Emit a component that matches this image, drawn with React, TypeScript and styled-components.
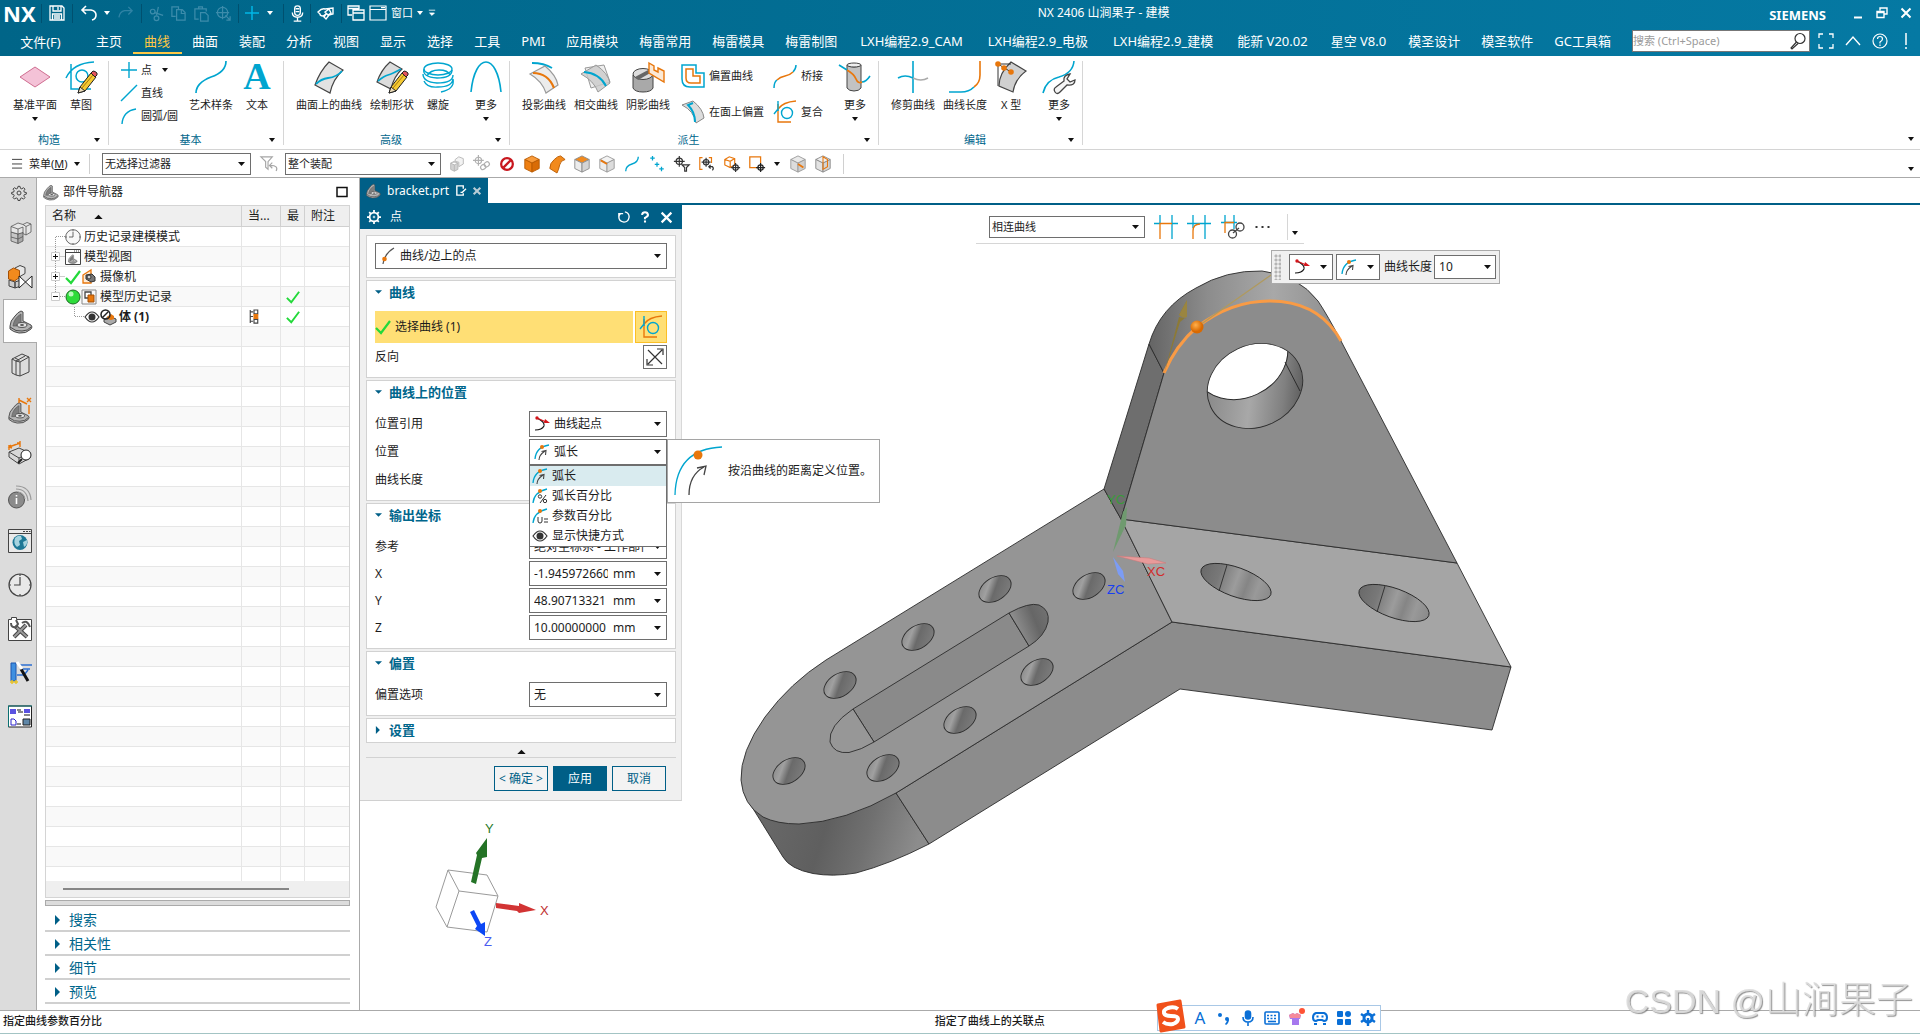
import React from "react";
import styled, { createGlobalStyle } from "styled-components";

const C = {
  cyan: "#00a5cf",
  orange: "#e8770c",
  ink: "#1c1c1c",
  line: "#4a4a4a",
  teal: "#005f87",
  frame: "#aaaaaa",
};

const Global = createGlobalStyle`
  *, *::before, *::after { box-sizing: border-box; }
  body { margin: 0; }
  body, button, input, select, table {
    font-family: "Noto Sans", "Noto Sans CJK SC", sans-serif;
    font-size: 12px;
    line-height: 16px;
    color: ${C.ink};
  }
  button { background: none; border: 0; padding: 0; cursor: default; white-space: nowrap; }
  svg { display: block; flex: none; }
`;

/* ------------------------------------------------------------------ icons */

const pencil = (
  <g>
    <path d="M13 32l2-6L26 12l5 4L20 30z" fill="#f5c931" stroke="#222" strokeWidth="1" />
    <path d="M13 32l2-6 5 4z" fill="#ecdcb8" stroke="#222" strokeWidth="1" />
    <path d="M17 27L28 14" stroke="#a77a10" />
    <path d="M26 12l2-2q2 0 4 2v2l-2 2z" fill="#e4545c" stroke="#222" strokeWidth="1" />
  </g>
);

const bracket = (
  <g strokeLinejoin="round">
    <path d="M1 17q0-5 5-10 3-4 6-5l2 1v9l8 4q2 2 0 4-5 5-12 4-6-1-9-4z" fill="#b4b4b4" stroke="#4c4c4c" />
    <path d="M4 17q1-8 8-12v9q-4 1-4 3z" fill="#7d7d7d" stroke="#5a5a5a" strokeWidth=".7" />
    <ellipse cx="13" cy="16" rx="5" ry="2.4" fill="#e4e4e4" stroke="#4c4c4c" />
    <ellipse cx="13" cy="16" rx="2" ry="1" fill="#555" />
    <path d="M1 18q6 5 12 4 6 0 9-4" fill="none" stroke="#4c4c4c" />
  </g>
);

const cube = (top: string, left: string, right: string, edge: string) => (
  <g stroke={edge} strokeLinejoin="round">
    <path d="M10 1l8 4-8 4-8-4z" fill={top} />
    <path d="M2 5l8 4v10l-8-4z" fill={left} />
    <path d="M18 5l-8 4v10l8-4z" fill={right} />
  </g>
);

const arcArrow = (
  <g fill="none">
    <path d="M1 15Q2 3 15 1" stroke={C.cyan} strokeWidth="1.3" />
    <path d="M5 16q0-5 6-9M7.500 7.500L12 6.500 11.500 11" stroke="#444" strokeWidth="1.100" />
    <circle cx="8" cy="3" r="2" fill={C.orange} />
  </g>
);

const sketchCurves = (a: string, b: string) => (
  <g fill="none" strokeWidth="1.4">
    <path d="M5 4v18h13" stroke={a} />
    <path d="M5 9Q10 2 23 1" stroke={a} />
    <path d="M5 1v10M1 14l4-5" stroke={b} />
    <circle cx="14" cy="13" r="5.5" stroke={b} />
  </g>
);

type Glyph = { box: string; art: React.ReactNode };

const G: Record<string, Glyph> = {
  save: { box: "0 0 18 18", art: <g fill="none" stroke="#fff" strokeWidth="1.3"><path d="M2 2h12l2 2v12H2zM5 2v5h8V2M4.500 16v-6h9v6M6 12h6M6 14h6M10 3v3" /></g> },
  undo: { box: "0 0 18 18", art: <g fill="none" stroke="#fff" strokeWidth="1.6"><path d="M6 2L2 6l4 4M2 6h9q5 1 5 5t-4 5" /></g> },
  redo: { box: "0 0 18 18", art: <g fill="none" stroke="#2f83a5" strokeWidth="1.4"><path d="M12 2l4 4-4 4M16 6H8q-5 1-6 7" /></g> },
  cut: { box: "0 0 18 18", art: <g fill="none" stroke="#3c8cab" strokeWidth="1.3"><circle cx="5" cy="7" r="2.500" /><circle cx="9" cy="14" r="2.500" /><path d="M7 8l9 3M9 11l2-9" /></g> },
  copy: { box: "0 0 18 18", art: <g fill="none" stroke="#3c8cab" strokeWidth="1.3"><path d="M6 12H2V2h7v3M7 5h6l3 3v8H7zM12 5v4h4" /></g> },
  paste: { box: "0 0 18 18", art: <g fill="none" stroke="#3c8cab" strokeWidth="1.3"><path d="M6 15H2V4h12v3M6 4V2h4v2M8 8h5l3 3v6H8z" /></g> },
  target: { box: "0 0 18 18", art: <g fill="none" stroke="#3c8cab" strokeWidth="1.3"><circle cx="8" cy="8" r="5.500" /><path d="M8 1v14M1 8h14M11 11l5 5M16 12v4h-4" /></g> },
  plusCyan: { box: "0 0 16 16", art: <path d="M8 1v14M1 8h14" stroke="#00b7e6" strokeWidth="1.500" fill="none" /> },
  mic: { box: "0 0 18 18", art: <g fill="none" stroke="#fff" strokeWidth="1.400"><rect x="6" y="1" width="6" height="10" rx="3" /><path d="M3.500 8q0 5 5.500 5t5.500-5M9 13v4M5 17h8M7 4h4M7 7h4" /></g> },
  hand: { box: "0 0 18 18", art: <g fill="none" stroke="#fff" strokeWidth="1.400"><path d="M1 8q4-4 7-3l8-1v6l-4 1-3 4-2-2 2-3-3 2q-3 0-3-2zM8 8l4-3 2 4-3 2z" /></g> },
  windows: { box: "0 0 18 18", art: <g fill="none" stroke="#fff" strokeWidth="1.300"><path d="M5 11H1V2h11v3M1 4.500h11M6 6h11v10H6zM6 9h11" /></g> },
  window: { box: "0 0 18 18", art: <g fill="none" stroke="#fff" strokeWidth="1.200"><path d="M1 2h16v14H1zM1 5.500h16M12 3.700h4" /></g> },
  overflow: { box: "0 0 10 10", art: <path d="M1 1.500h8M2 5h6L5 8z" fill="#fff" stroke="#fff" /> },
  fullscreen: { box: "0 0 18 18", art: <path d="M2 6V2h4M12 2h4v4M16 12v4h-4M6 16H2v-4" fill="none" stroke="#fff" strokeWidth="1.300" /> },
  chevronUp: { box: "0 0 18 18", art: <path d="M2 13l7-8 7 8" fill="none" stroke="#fff" strokeWidth="1.400" /> },
  help: { box: "0 0 18 18", art: <g fill="none" stroke="#fff" strokeWidth="1.200"><circle cx="9" cy="9" r="7" /><path d="M6.500 7q0-2.500 2.500-2.500t2.500 2.500Q11.500 8.500 9 10v1.500M9 12.500v1.500" /></g> },
  alert: { box: "0 0 6 18", art: <path d="M3 1v12M3 15v2" stroke="#fff" strokeWidth="1.500" /> },
  search: { box: "0 0 18 18", art: <g fill="none" stroke="#333" strokeWidth="1.200"><circle cx="11" cy="6.500" r="5" /><path d="M7.500 10L2 16l1 1 6-5.500" /></g> },
  minimize: { box: "0 0 12 12", art: <path d="M2 10.500h8" stroke="#fff" strokeWidth="2" /> },
  restore: { box: "0 0 12 12", art: <path d="M4 3.500V1h7v6H8M1 4.500h7v6H1zM1 5.500h7" fill="none" stroke="#fff" strokeWidth="1.400" /> },
  close: { box: "0 0 12 12", art: <path d="M1.500 1.500l9 9M10.500 1.500l-9 9" stroke="#fff" strokeWidth="2" /> },
  closeDim: { box: "0 0 12 12", art: <path d="M2 2l8 8M10 2l-8 8" stroke="#b9cdd6" strokeWidth="2.500" /> },

  plane: { box: "0 0 32 32", art: <path d="M1 16L16 6l15 10-15 10z" fill="#f4c2d7" stroke="#cf6d90" /> },
  sketch: { box: "0 0 32 32", art: <g><g fill="none" stroke={C.cyan} strokeWidth="1.500"><path d="M6 3v25h20M1 17Q8 2 29 1" /><circle cx="17" cy="15" r="6" /></g>{pencil}</g> },
  point: { box: "0 0 16 16", art: <path d="M8 0v16M0 8h16" stroke={C.cyan} strokeWidth="1.400" /> },
  lineSeg: { box: "0 0 16 16", art: <path d="M0 16L16 0" stroke={C.cyan} strokeWidth="1.400" /> },
  arc: { box: "0 0 16 16", art: <path d="M1 16Q2 3 15 1" fill="none" stroke={C.cyan} strokeWidth="1.400" /> },
  spline: { box: "0 0 32 32", art: <path d="M1 32Q1 22 16 16 31 11 31 0" fill="none" stroke={C.cyan} strokeWidth="1.700" /> },
  letter: { box: "0 0 32 32", art: <text x="16" y="28" textAnchor="middle" fontFamily="Liberation Serif, serif" fontWeight="700" fontSize="38" fill={C.cyan}>A</text> },
  surfCurve: { box: "0 0 32 32", art: <g><path d="M16 1l14 8Q20 18 17 32L2 24Q7 10 16 1z" fill="#e2e2e2" stroke="#444" strokeWidth="1.200" /><path d="M3 23q5-5 12-6 9-1 14-7" fill="none" stroke={C.cyan} strokeWidth="1.800" /></g> },
  drawShape: { box: "0 0 32 32", art: <g><path d="M14 1l12 7Q18 15 15 28L1 21Q5 9 14 1z" fill="#dcdcdc" stroke="#444" strokeWidth="1.200" /><path d="M2 20q6-5 10-6t13-6" fill="none" stroke={C.cyan} strokeWidth="1.700" />{pencil}</g> },
  helix: { box: "0 0 32 32", art: <g fill="none" stroke={C.cyan} strokeWidth="1.400"><ellipse cx="16" cy="8" rx="14" ry="6" /><path d="M2 8q-2 8 13 9 15 0 15-8M1 13q0 8 14 9 16 0 16-8M2 20q3 7 14 6 14 0 15-8M31 18q2 10-12 13M5 15Q8 9 17 9t11 5" /></g> },
  parabola: { box: "0 0 32 32", art: <path d="M1 31C5-9 27-9 31 31" fill="none" stroke={C.cyan} strokeWidth="1.600" /> },
  project: { box: "0 0 32 32", art: <g><path d="M4 2q12 0 20 5" fill="none" stroke={C.cyan} strokeWidth="1.800" /><path d="M2 13L17 5Q28 14 30 24L18 32Q14 20 2 13z" fill="#ececec" stroke="#999" strokeWidth="1.200" /><path d="M5 12Q20 12 26 27" fill="none" stroke={C.orange} strokeWidth="2.200" /></g> },
  intersect: { box: "0 0 32 32", art: <g><path d="M5 7l19-3 6 17-19 6z" fill="#eee" stroke="#999" /><path d="M1 13L16 4Q28 12 30 22L18 31Q14 20 1 13z" fill="#c9c9c9" fillOpacity=".8" stroke="#999" /><path d="M4 11Q19 12 26 25" fill="none" stroke={C.cyan} strokeWidth="2.200" /></g> },
  shadow: { box: "0 0 32 32", art: <g><path d="M1 14v13q2 4 10 4t10-4V14z" fill="#a9a9a9" stroke="#444" /><ellipse cx="11" cy="13" rx="10" ry="5.500" fill="#ddd" stroke="#444" /><path d="M3 16L18 8l2 3L6 19z" fill="#666" /><path d="M17 2l5 3v4l4 2V7l6 3v11L17 12z" fill="#fbe9d6" stroke={C.orange} strokeWidth="1.400" /></g> },
  offset: { box: "0 0 24 24", art: <g fill="none"><path d="M1 1h14v8h8v14H9Q1 23 1 15z" stroke={C.cyan} strokeWidth="1.500" /><path d="M5 5h7v7h7v7h-9q-5 0-5-5z" stroke={C.orange} strokeWidth="1.500" /></g> },
  offsetFace: { box: "0 0 24 24", art: <g><path d="M1 5l11-4q10 8 11 17l-8 5Q13 11 1 5z" fill="#ddd" stroke="#888" /><path d="M14 22Q14 12 7 5l5-2" fill="none" stroke={C.cyan} strokeWidth="2" /></g> },
  bridge: { box: "0 0 24 24", art: <g fill="none" strokeWidth="1.500"><path d="M1 24q0-6 3-8M20 8q3-3 3-7" stroke={C.cyan} /><path d="M4 16q3-3 8-4t8-4" stroke={C.orange} /></g> },
  composite: { box: "0 0 24 24", art: sketchCurves(C.orange, C.cyan) },
  moreDerive: { box: "0 0 32 32", art: <g><path d="M8 4v23q2 3 7 3t7-3V4q-2 2-7 2T8 4z" fill="#c2c2c2" stroke="#444" /><ellipse cx="15" cy="4" rx="7" ry="2" fill="#eee" stroke="#444" /><path d="M0 4l8 5M23 21q4 0 8-6" stroke={C.cyan} strokeWidth="1.600" fill="none" /><path d="M8 9q7 4 9 9 2 5 6 3" stroke={C.orange} strokeWidth="1.800" fill="none" /></g> },
  trim: { box: "0 0 32 32", art: <g fill="none" strokeWidth="1.600"><path d="M16 0v32" stroke={C.cyan} /><path d="M1 17q7-4 15 0" stroke={C.cyan} /><path d="M16 17q8 4 15 0" stroke="#aaa" /></g> },
  length: { box: "0 0 32 32", art: <g fill="none" strokeWidth="1.600"><path d="M0 31h12Q20 31 25 26" stroke={C.cyan} /><path d="M31 0v14q0 8-6 12" stroke={C.orange} /></g> },
  xform: { box: "0 0 32 32", art: <g><path d="M16 1l15 9Q20 18 18 31L4 25Q4 12 16 1z" fill="#d0d0d0" stroke="#444" strokeWidth="1.200" /><path d="M3 3h13M3 3l13 8M3 3v22" stroke="#333" /><g fill={C.orange}><circle cx="3" cy="3" r="2.800" /><circle cx="9" cy="7" r="2.800" /><circle cx="16" cy="11" r="2.800" /></g></g> },
  moreEdit: { box: "0 0 32 32", art: <g fill="none"><path d="M0 32Q3 19 16 16 30 12 31 0" stroke={C.cyan} strokeWidth="1.600" /><path d="M12 31q-2-3 1-5l8-6q-1-6 6-7l-3 5 3 3 5-2q0 6-8 5l-7 7q-3 3-5 0z" fill="#f5f5f5" stroke="#444" strokeWidth="1.300" /></g> },

  burger: { box: "0 0 12 12", art: <path d="M0 1.500h11M0 6.500h11M0 11h11" stroke="#333" /> },
  filterReset: { box: "0 0 20 20", art: <g fill="none" stroke="#a5a5a5" strokeWidth="1.200"><path d="M2 3h12L9.500 8v8L7 14V8zM18 18q3-6-6-6M14 9l-3 3 3 3" /></g> },
  cubesDim: { box: "0 0 20 20", art: <g stroke="#b5b5b5" fill="#d2d2d2"><path d="M3 9l4-2 4 2v7l-4 2-4-2zM3 9l4 2 4-2M7 11v7" /><path d="M8 5l4-3 5 2v6l-5 3V8L8 7z" fill="#f3f3f3" /></g> },
  linkDim: { box: "0 0 20 20", art: <g fill="none" stroke="#b0b0b0" strokeWidth="1.300"><circle cx="6" cy="6" r="3.500" /><path d="M6 0v12M0 6h12" /><rect x="8" y="11" width="6" height="5" rx="2.500" transform="rotate(-40 11 13)" /><rect x="12" y="8" width="6" height="5" rx="2.500" transform="rotate(-40 15 10)" /></g> },
  forbid: { box: "0 0 20 20", art: <g fill="#fff" stroke="#c8171e" strokeWidth="2.500"><circle cx="10" cy="10" r="6.500" /><path d="M14 6l-8 8" /></g> },
  cubeOrange: { box: "0 0 20 20", art: cube("#f99b3a", "#ee7f12", "#d96c06", "#b95a00") },
  faceOrange: { box: "0 0 20 20", art: <path d="M7 5q4-4 7-4l5 4q-5 1-6 6t-3 9L2 15q0-6 5-10z" fill="#f28a1d" stroke="#b95a00" /> },
  cubeTop: { box: "0 0 20 20", art: cube("#f28a1d", "#ececec", "#d4d4d4", "#8a8a8a") },
  cubeEdge: { box: "0 0 20 20", art: <g>{cube("#f3f3f3", "#ececec", "#dcdcdc", "#999")}<path d="M3 6l7 4" stroke={C.orange} strokeWidth="2" /></g> },
  curveS: { box: "0 0 20 20", art: <path d="M3 18q0-6 7-8t7-8" fill="none" stroke={C.cyan} strokeWidth="1.500" /> },
  points: { box: "0 0 20 20", art: <path d="M5 1v5M2.500 3.500h5M10 8v5M7.500 10.500h5M15 13v5M12.500 15.500h5" stroke={C.cyan} strokeWidth="1.400" /> },
  pickFilter: { box: "0 0 20 20", art: <g fill="none" stroke="#333" strokeWidth="1.300"><circle cx="7" cy="7" r="3.500" /><path d="M7 1v12M1 7h12M10 11h8l-3 3v4h-2v-4z" fill="#fff" /></g> },
  pickReset: { box: "0 0 20 20", art: <g fill="none" strokeWidth="1.300"><path d="M5 3H2v13h3M12 3h3v6" stroke={C.orange} /><circle cx="9" cy="8" r="3" stroke="#333" /><path d="M9 3v10M4 8h10M12 13h4q2 2 0 4M14 11l-2 2 2 2" stroke="#333" /></g> },
  pickBody: { box: "0 0 20 20", art: <g fill="none" strokeWidth="1.300"><path d="M2 5l5-3 6 2v7l-5 3-6-3zM2 5l6 2 5-3M8 7v6" stroke={C.orange} /><circle cx="14" cy="14" r="3" fill="#fff" stroke="#333" /><path d="M14 9v10M9 14h10" stroke="#333" /></g> },
  pickRect: { box: "0 0 20 20", art: <g fill="none" strokeWidth="1.400"><path d="M10 14H2V2h12v7" stroke={C.orange} /><circle cx="14" cy="14" r="3" stroke="#222" /><path d="M14 9v10M9 14h10" stroke="#222" /></g> },
  cubeMid: { box: "0 0 20 20", art: <g>{cube("#e9e9e9", "#dcdcdc", "#cfcfcf", "#999")}<path d="M10 10l6 4" stroke={C.orange} strokeWidth="2" /></g> },
  cubeSplit: { box: "0 0 20 20", art: <g>{cube("#efefef", "#e2e2e2", "#d4d4d4", "#888")}<path d="M10 2v14l5-3V5z" fill="none" stroke={C.orange} strokeWidth="1.200" /></g> },

  gear: { box: "0 0 24 24", art: <g fill="none" stroke="#444" strokeWidth="1.500"><circle cx="12" cy="12" r="3" /><path d="M10.500 2h3l.7 3 2 .8L18.800 4l2.200 2.200-1.800 2.600.8 2 3 .5v2.400l-3 .7-.8 2 1.800 2.600-2.200 2.200-2.600-1.800-2 .8-.7 3h-3l-.7-3-2-.8L5.200 21 3 18.800l1.800-2.600-.8-2-3-.7v-2.400l3-.5.8-2L3 6.200 5.200 4l2.600 1.800 2-.8z" /></g> },
  gearWhite: { box: "0 0 16 16", art: <g fill="none" stroke="#fff"><circle cx="8" cy="8" r="5" strokeWidth="2" /><circle cx="8" cy="8" r="1" strokeWidth="1" /><path d="M8 0v3M8 13v3M0 8h3M13 8h3M2.500 2.500l2 2M11.500 11.500l2 2M13.500 2.500l-2 2M4.500 11.500l-2 2" strokeWidth="2" /></g> },
  assembly: { box: "0 0 24 24", art: <g fill="#c6c6c6" stroke="#555" strokeWidth=".8" strokeLinejoin="round"><path d="M3 11l7 2v9.500L3 20z" /><path d="M10 13l5-2v9l-5 2.500z" fill="#aaa" /><path d="M3 16l7 2 5-2.500" fill="none" /><path d="M3 11V5.500L10 2l5 1.500 4-2 4 1.500v8l-5 3-3-1.500v-1L10 13z" fill="#e6e6e6" /><path d="M3 5.500l7 2.500 5-2v6M10 8v5M15 3.500l3 2 5-2.500M18 5.500V14" fill="none" /></g> },
  constraint: { box: "0 0 24 24", art: <g strokeLinejoin="round"><path d="M7 3l5-2.500 5 2v6l-5 3z" fill="#e6e6e6" stroke="#444" /><path d="M1 15l6 2v6l-6-2zM7 17l6-2v6l-6 2z" fill="#ccc" stroke="#444" /><path d="M.500 6l5-3 6 2.500v7l-5 3.500-6-2z" fill="#f28a1d" stroke="#a35006" /><path d="M11 11l13 12V11L11 23z" fill="#fff" stroke="#222" /></g> },
  bracket: { box: "0 0 24 24", art: bracket },
  books: { box: "0 0 24 24", art: <g fill="#ddd" stroke="#444" strokeLinejoin="round"><path d="M4 6l10-5 7 3v15l-9 4-4-1-4-2z" /><path d="M4 6l4 2 9-5M8 8v14M12 9v14M12 9l9-5M8 8l4 1M7 5l4 2 0 1" fill="none" /></g> },
  bracketDims: { box: "0 0 24 24", art: <g><g transform="translate(0 4) scale(.92)">{bracket}</g><path d="M11 1v5M11 3l8 4M19 1l4 4M23 1l-4 4M21 8v9" stroke={C.orange} strokeWidth="1.400" /></g> },
  measure: { box: "0 0 24 24", art: <g><path d="M1 11l10-4 11 5v5l-11 6L1 16z" fill="#d8d8d8" stroke="#444" /><path d="M1 11l10 6 11-5M11 17v6" fill="none" stroke="#444" /><path d="M1 9V4M1 6l11-4M12 0v6M3 4L1 6l3 1M9 2l3 0" stroke={C.orange} strokeWidth="1.400" fill="none" /><circle cx="18" cy="14" r="5" fill="#fff" stroke="#222" /><path d="M14 18l-4 4" stroke="#222" strokeWidth="2" /></g> },
  info: { box: "0 0 24 24", art: <g><circle cx="8.500" cy="15" r="8" fill="#8b8b8b" stroke="#555" /><path d="M8.500 13v6M8.500 10v1.500" stroke="#fff" strokeWidth="1.600" /><path d="M8 4q11 0 12 12M8 1q14 0 15 14M10 7q6 1 7 7" fill="none" stroke="#9a9a9a" strokeWidth="1.200" /></g> },
  browser: { box: "0 0 24 24", art: <g><path d="M.5.5h23v23H.5z" fill="#e9e9e9" stroke="#444" /><path d="M1 4.500h22M15 2.500h2M18 2.500h2M21 2.500h1.500" stroke="#444" /><circle cx="12" cy="13.500" r="7.500" fill="#1d7896" /><path d="M7 9q3-3 6-2l1 3-3 2 1 4-3 2q-4-3-2-9zM15 13l4-2q1 5-3 7z" fill="#a5d3df" /></g> },
  clock: { box: "0 0 24 24", art: <g fill="none" stroke="#444" strokeWidth="1.200"><circle cx="12" cy="12" r="11" fill="#f2f2f2" fillOpacity=".6" /><path d="M12 4v8H6M12 1v2M12 21v2M1 12h2M21 12h2" /></g> },
  tools: { box: "0 0 24 24", art: <g><path d="M.5 2.500h3V.5h5v2h15v21H.5z" fill="#fff" stroke="#444" /><path d="M6 20L18 8M7 9l12 11" stroke="#444" strokeWidth="4" /><path d="M6 20L18 8M7 9l12 11" stroke="#999" strokeWidth="2" /><path d="M3 6q0 5 5 4l2-3-2-4M14 6q5-4 8 4" fill="none" stroke="#555" strokeWidth="2" /></g> },
  wand: { box: "0 0 24 24", art: <g><path d="M3 2h5v18H3z" fill="#3f8fe0" stroke="#1c56b0" /><path d="M9 14h7l4-5M12 4h12M14 8h8" fill="none" stroke="#2c6fd1" strokeWidth="1.500" /><path d="M13 8l7 12" stroke="#111" strokeWidth="3" /><path d="M9 1l5 7" stroke="#fff" strokeWidth="3" /><path d="M2 21h8M4 19v4M8 19v4" stroke="#e8c42c" strokeWidth="1.500" /></g> },
  template: { box: "0 0 24 24", art: <g><path d="M.5 1h23v21H.5z" fill="#fff" stroke="#222" /><path d="M0 1h24M.5 1v21" stroke="#0b6f71" /><path d="M2 4h6v5H2zM16 4h6v4h-6z" fill="#5a52e0" /><path d="M9 5h4M10 7h5M9 19h4M16 10h6" stroke="#111" /><path d="M3 14h3l2 2v4H3z" fill="#fff" stroke="#2b22c8" /><path d="M15 14h7v6h-7z" fill="#5f87a8" stroke="#222" /></g> },

  sortUp: { box: "0 0 10 6", art: <path d="M0 6l5-5 5 5z" fill="#111" /> },
  views: { box: "0 0 16 16", art: <g><path d="M.5.500h15v15H.500z" fill="#fff" stroke="#444" /><path d="M1 3.500h14M9 2h1M11 2h1M13 2h1" stroke="#444" /><g transform="translate(3 5) scale(.4)">{bracket}</g></g> },
  check: { box: "0 0 16 16", art: <path d="M1 9l5 5L15 2" fill="none" stroke="#23d93a" strokeWidth="2.200" /> },
  camera: { box: "0 0 16 16", art: <g><path d="M2 6l8-5v13H2z" fill="#fdebd6" stroke={C.orange} strokeWidth="1.300" /><path d="M5 6l6-1 3 3v4l-4 1-5-3z" fill="#777" stroke="#333" /><circle cx="8" cy="8" r="2" fill="#ccc" stroke="#333" /></g> },
  ball: { box: "0 0 16 16", art: <g><circle cx="8" cy="8" r="7" fill="#2ddb3a" stroke="#1d6b24" /><circle cx="6" cy="5" r="2.500" fill="#b9f8bd" /></g> },
  history: { box: "0 0 16 16", art: <g fill="none"><path d="M1 4V1h3M12 1h3v3M15 12v3h-3M4 15H1v-3M1 4v8M15 4v8M4 1h8M4 15h8" stroke="#888" /><path d="M4 3h6v6H4z" fill="#fff" stroke="#444" strokeWidth="1.300" /><path d="M7 6h6v7H7z" fill={C.orange} stroke="#a35006" /></g> },
  eye: { box: "0 0 16 16", art: <g><path d="M1 8q7-10 14 0-7 10-14 0z" fill="#fff" stroke="#333" strokeWidth="1.200" /><circle cx="8" cy="8" r="3.500" fill="#333" /></g> },
  bodyIcon: { box: "0 0 16 16", art: <g><path d="M4 11l5-4 7 3v3l-6 3-6-3z" fill="#aaa" stroke="#444" /><path d="M7 8l4-3 3 2v3l-3 1-4-1z" fill={C.orange} /><circle cx="5.500" cy="5.500" r="4.500" fill="none" stroke="#222" strokeWidth="1.500" /><path d="M2.500 8.500l6-6" stroke="#222" strokeWidth="1.500" /></g> },
  struct: { box: "0 0 10 16", art: <g fill="none" stroke="#444" strokeWidth="1.200"><path d="M1 1v14M1 3h3M1 8h3M1 13h3M5 1h4v4H5zM5 11h4v4H5z" /><path d="M5 6h4v4H5z" fill={C.orange} stroke={C.orange} /></g> },
  maximize: { box: "0 0 12 12", art: <path d="M1 1.500h10v9H1z" fill="none" stroke="#111" strokeWidth="1.500" /> },
  tri: { box: "0 0 6 10", art: <path d="M1 0l5 5-5 5z" fill={C.teal} /> },
  triDown: { box: "0 0 8 6", art: <path d="M0 1h8L4 5z" fill={C.teal} /> },

  edit: { box: "0 0 12 12", art: <path d="M9 4V1H2v10h7V9M12 4L8 8H6" fill="none" stroke="#fff" strokeWidth="1.500" /> },
  reset: { box: "0 0 14 14", art: <path d="M8 1q5 1 5 6-1 6-6 6-6-1-6-6 0-2 2-4M1 7l0-4h5" fill="none" stroke="#fff" strokeWidth="1.600" /> },
  question: { box: "0 0 14 14", art: <path d="M3.500 4.500Q4 1.500 7 1.500t3.500 3Q10.500 6.500 7 8v1.500M7 11v2.500" fill="none" stroke="#fff" strokeWidth="2.400" /> },
  pointOnCurve: { box: "0 0 16 16", art: <g><path d="M3 16Q4 6 14 0" fill="none" stroke="#555" strokeWidth="1.200" /><circle cx="4.500" cy="11" r="2.300" fill={C.orange} /></g> },
  curveStart: { box: "0 0 16 16", art: <g><path d="M3 2q8 4 7 8-2 4-9 4" fill="none" stroke="#111" strokeWidth="1.100" /><path d="M3 2l9 4" stroke="#d4151b" strokeWidth="1.300" /><path d="M11 3l5 4-6 0z" fill="#d4151b" /><circle cx="3" cy="2" r="1.700" fill="#d4151b" /></g> },
  arcLen: { box: "0 0 16 16", art: arcArrow },
  arcPercent: { box: "0 0 16 16", art: <g fill="none"><path d="M1 15Q2 4 15 1" stroke={C.cyan} strokeWidth="1.300" /><circle cx="8" cy="3" r="2" fill={C.orange} /><circle cx="8" cy="8.500" r="1.700" stroke="#333" /><circle cx="13" cy="13" r="1.700" stroke="#333" /><path d="M14 7l-6 8" stroke="#333" /></g> },
  arcParam: { box: "0 0 16 16", art: <g fill="none"><path d="M1 15Q2 4 15 1" stroke={C.cyan} strokeWidth="1.300" /><circle cx="8" cy="3" r="2" fill={C.orange} /><path d="M6 9v4q0 2 2 2t2-2V9M12 11h4M12 14h4" stroke="#333" /></g> },
  curvesPick: { box: "0 0 24 24", art: sketchCurves(C.orange, C.cyan) },
  reverse: { box: "0 0 20 20", art: <path d="M3 3l14 14M3 17L17 3M12 2h6v6M8 18H2v-6" fill="none" stroke="#333" strokeWidth="1.200" /> },

  stopAt: { box: "0 0 24 24", art: <g fill="none" strokeWidth="1.300"><path d="M6 0v9M0 8.500h6M18 0v24M18 8.500h6" stroke={C.cyan} /><path d="M6 24V8.500h12" stroke={C.orange} /></g> },
  follow: { box: "0 0 24 24", art: <g fill="none" strokeWidth="1.300"><path d="M6 0v13M0 8.500h24M18 0v24" stroke={C.cyan} /><path d="M6 24v-8q0-7 7-7" stroke={C.orange} /></g> },
  chain: { box: "0 0 24 24", art: <g fill="none" strokeWidth="1.300"><path d="M5 0v8M1 7.500h16M14 0v14" stroke={C.cyan} /><path d="M5 18V7.500h9" stroke={C.orange} /><circle cx="20" cy="12" r="4" stroke="#444" /><circle cx="12.500" cy="19" r="4" stroke="#444" /><path d="M13 18l6-5" stroke="#444" /></g> },
  dots: { box: "0 0 16 6", art: <path d="M1 3h2M7 3h2M13 3h2" stroke="#333" strokeWidth="2" /> },

  sogou: { box: "0 0 32 32", art: <g><path d="M4 5L26 1l4 26-23 4z" fill="#f1511b" stroke="#f1511b" strokeWidth="3" strokeLinejoin="round" /><path d="M24 9q-4-3-10-1-5 2-4 5t7 3q7 0 7 3t-5 5q-6 1-10-2" fill="none" stroke="#fff" strokeWidth="4" /></g> },
  imeA: { box: "0 0 16 16", art: <text x="8" y="14" textAnchor="middle" fontFamily="Noto Sans, sans-serif" fontSize="17" fill="#0a6fd6">A</text> },
  imePunct: { box: "0 0 16 16", art: <g fill="#0a6fd6"><circle cx="4" cy="5" r="2" /><circle cx="11" cy="9" r="2" /><path d="M13 9q0 4-3 6l-1-1q2-2 2-4z" /></g> },
  imeMic: { box: "0 0 16 16", art: <g fill="none" stroke="#0a6fd6" strokeWidth="1.600"><rect x="5.500" y="1" width="5" height="8" rx="2.500" fill="#0a6fd6" /><path d="M3 7q0 5 5 5t5-5M8 12v4" /></g> },
  imeKeys: { box: "0 0 16 16", art: <g fill="none" stroke="#0a6fd6" strokeWidth="1.600"><rect x="1" y="2" width="14" height="12" rx="1" /><path d="M3 5.500h10M3 8.500h10" strokeDasharray="2 1.500" /><path d="M4 11.500h8" /></g> },
  imeShirt: { box: "0 0 16 16", art: <g><path d="M1 5l4-2q2 2 4 0l4 2-1 4h-1v6H4V9H2z" fill="#a678ee" /><path d="M1 5l4-2q2 2 4 0l4 2-1 3H2z" fill="#f58a9b" /><circle cx="14" cy="1" r="3" fill="#ff5336" /></g> },
  imeGame: { box: "0 0 16 16", art: <g fill="none" stroke="#0a6fd6" strokeWidth="2"><path d="M4 3h8q3 1 3 4.500T12 11l-2-1H6l-2 1Q1 11 1 7.500T4 3z" /><path d="M4.500 6.500h2M9.500 6.500h2M2 14h3M11 14h3" /></g> },
  imeGrid: { box: "0 0 16 16", art: <g fill="#0a6fd6"><rect x="1" y="1" width="6" height="6" rx="1" /><circle cx="12" cy="4" r="3" /><rect x="1" y="9" width="6" height="6" rx="1" /><rect x="9" y="9" width="6" height="6" rx="1" /></g> },
  imeGear: { box: "0 0 16 16", art: <g fill="none" stroke="#0a6fd6"><circle cx="8" cy="8" r="4" strokeWidth="3" /><path d="M8 0v3M8 8v8M1 4l3 2M12 10l3 2M15 4l-3 2M4 10l-3 2" strokeWidth="2.400" /></g> },
};

const Icon = ({ name, w = 16, h }: { name: string; w?: number; h?: number }) => (
  <svg width={w} height={h ?? w} viewBox={G[name].box} overflow="visible" aria-hidden="true">{G[name].art}</svg>
);

const Caret = ({ color = "#111", w = 7 }: { color?: string; w?: number }) => (
  <svg width={w} height="4" viewBox="0 0 8 4" preserveAspectRatio="none" aria-hidden="true"><path d="M0 0h8L4 4z" fill={color} /></svg>
);

/* ----------------------------------------------------------------- header */

const Shell = styled.div`
  display: flex;
  flex-direction: column;
  height: 100vh;
  overflow: hidden;
  background: #fff;
`;

const Header = styled.header`
  background: linear-gradient(90deg, #006588, #0579a3);
  color: #fff;
`;

const TitleRow = styled.div`
  display: flex;
  justify-content: space-between;
  align-items: center;
  height: 26px;
  padding: 0 8px 0 3px;
`;

const Quick = styled.div`
  display: flex;
  align-items: center;
  height: 26px;
`;

const Brand = styled.b`
  width: 34px;
  font-size: 22px;
  line-height: 26px;
`;

const QuickButton = styled.button<{ $w?: number }>`
  display: flex;
  align-items: center;
  justify-content: center;
  gap: 4px;
  width: ${(p) => p.$w ?? 24}px;
  height: 24px;
  font-size: 11px;
  color: #fff;
`;

const QuickRule = styled.span`
  width: 1px;
  height: 19px;
  margin: 0 4px;
  background: #00506f;
`;

const Title = styled.h1`
  margin: 0;
  font-size: 12px;
  font-weight: 400;
  line-height: 26px;
`;

const WindowButtons = styled.div`
  display: flex;
  align-items: center;
  gap: 12px;
`;

const Maker = styled.b`
  margin-right: 14px;
  padding-top: 3px;
  font-size: 13px;
  line-height: 20px;
`;

const TabRow = styled.div`
  display: flex;
  align-items: flex-start;
  height: 30px;
  padding-right: 6px;
`;

const FileTab = styled.button`
  width: 86px;
  height: 28px;
  padding: 3px 5px 0 0;
  font-size: 13px;
  color: #fff;
`;

const Tab = styled.button<{ $on?: boolean; $room: number }>`
  height: 28px;
  padding: 3px ${(p) => p.$room}px 0 ${(p) => p.$room - 1}px;
  border-bottom: 2px solid ${(p) => (p.$on ? "#ffc845" : "transparent")};
  font-size: 13px;
  color: ${(p) => (p.$on ? "#ffc845" : "#fff")};
`;

const Tabs = styled.nav`
  display: flex;
  flex: 1;
  min-width: 0;
`;

const SearchBox = styled.label`
  display: flex;
  align-items: center;
  width: 178px;
  height: 22px;
  margin: 4px 7px 0 0;
  padding-right: 2px;
  border: 1px solid #777;
  background: #fff;
  input {
    flex: 1;
    min-width: 0;
    padding: 0;
    border: 0;
    outline: 0;
    font-size: 11px;
  }
  input::placeholder { color: #9b9b9b; }
`;

const TabTools = styled.div`
  display: flex;
  align-items: center;
  gap: 9px;
  height: 30px;
`;

/* ----------------------------------------------------------------- ribbon */

const Ribbon = styled.section`
  display: flex;
  height: 94px;
  padding-left: 1px;
  border-bottom: 1px solid #d4d4d4;
`;

const Group = styled.div`
  display: flex;
  flex-direction: column;
  padding: 2px 4px 0 8px;
  background: linear-gradient(#d6d6d6, #d6d6d6) no-repeat right 5px / 1px 84px;
`;

const GroupBody = styled.div<{ $end: number }>`
  display: flex;
  height: 73px;
  padding-right: ${(p) => p.$end}px;
`;

const Big = styled.button<{ $apart?: boolean }>`
  display: flex;
  flex-direction: column;
  align-items: center;
  min-width: 40px;
  margin-left: ${(p) => (p.$apart ? 8 : 0)}px;
  padding: 3px 4px 0;
  font-size: 11px;
  span { margin: 4px 0; }
`;

const Stack = styled.div<{ $before?: number; $after?: number }>`
  display: flex;
  flex-direction: column;
  margin-left: ${(p) => p.$before ?? 0}px;
  margin-right: ${(p) => p.$after ?? 0}px;
`;

const Small = styled.button<{ $h: number }>`
  display: flex;
  align-items: center;
  gap: 4px;
  height: ${(p) => p.$h}px;
  padding: 0 4px;
  font-size: 11px;
  svg + span + svg { margin-left: 6px; }
`;

const GroupLabel = styled.div`
  display: flex;
  align-items: center;
  height: 18px;
  font-size: 11px;
  color: #00668c;
  span { flex: 1; text-align: center; }
  button { width: 16px; display: flex; justify-content: center; }
`;

const RibbonEnd = styled.div`
  display: flex;
  align-items: flex-end;
  margin-left: auto;
  padding: 0 6px 8px;
`;

type Item = { icon: string; text: string; more?: boolean; apart?: boolean };

const BigButton = ({ icon, text, more, apart }: Item) => (
  <Big $apart={apart}>
    <Icon name={icon} w={32} />
    <span>{text}</span>
    {more && <Caret w={6} />}
  </Big>
);

const SmallStack = ({ items, h, size, before, after }: { items: Item[]; h: number; size: number; before?: number; after?: number }) => (
  <Stack $before={before} $after={after}>
    {items.map((i) => (
      <Small key={i.text} $h={h}>
        <Icon name={i.icon} w={size} />
        <span>{i.text}</span>
        {i.more && <Caret w={6} />}
      </Small>
    ))}
  </Stack>
);

const RibbonGroup = ({ label, end = 0, children }: { label: string; end?: number; children: React.ReactNode }) => (
  <Group>
    <GroupBody $end={end}>{children}</GroupBody>
    <GroupLabel>
      <span>{label}</span>
      <button aria-label={`${label} 选项`}><Caret w={6} /></button>
    </GroupLabel>
  </Group>
);

/* ---------------------------------------------------------- selection bar */

const SelectionBar = styled.section`
  display: flex;
  align-items: center;
  height: 28px;
  padding: 0 6px 0 9px;
  border-bottom: 1px solid ${C.frame};
`;

const MenuButton = styled.button`
  display: flex;
  align-items: center;
  gap: 6px;
  width: 80px;
  padding-left: 3px;
  font-size: 11px;
`;

const BarRule = styled.span`
  width: 1px;
  height: 20px;
  margin-right: 12px;
  background: #d0d0d0;
`;

const Combo = styled.div<{ $w?: number; $h: number; $font?: number; $pad?: number }>`
  position: relative;
  width: ${(p) => (p.$w ? `${p.$w}px` : "100%")};
  height: ${(p) => p.$h}px;
  select {
    width: 100%;
    height: 100%;
    padding: 0 20px 0 ${(p) => p.$pad ?? 2}px;
    border: 1px solid #6e6e6e;
    border-radius: 0;
    outline: 0;
    appearance: none;
    background: #fff;
    font-size: ${(p) => p.$font ?? 12}px;
  }
`;

const ComboCaret = styled.span`
  position: absolute;
  top: 50%;
  right: 6px;
  margin-top: -2px;
  pointer-events: none;
`;

const ComboIcon = styled.span`
  position: absolute;
  top: 50%;
  left: 5px;
  margin-top: -8px;
  pointer-events: none;
`;

type ComboProps = { id: string; label?: string; value: string; w?: number; h: number; font?: number; pad?: number; icon?: string; children?: React.ReactNode };

const ComboBox = ({ id, label, value, w, h, font, pad, icon, children }: ComboProps) => (
  <Combo $w={w} $h={h} $font={font} $pad={pad}>
    <select id={id} aria-label={label} defaultValue={value}>
      <option value={value}>{value}</option>
    </select>
    {icon && <ComboIcon><Icon name={icon} /></ComboIcon>}
    <ComboCaret><Caret /></ComboCaret>
    {children}
  </Combo>
);

const BarIcons = styled.div`
  display: flex;
  align-items: center;
  margin-left: 3px;
`;

const BarIcon = styled.button<{ $w?: number }>`
  display: flex;
  align-items: center;
  justify-content: center;
  width: ${(p) => p.$w ?? 25}px;
  height: 22px;
`;

const BarEnd = styled.div`
  margin-left: auto;
  padding-top: 6px;
`;

/* ------------------------------------------------------------ rail and nav */

const Main = styled.main`
  display: flex;
  flex: 1;
  min-height: 0;
`;

const Rail = styled.nav`
  width: 37px;
  background: #dcdcdc;
  border-right: 1px solid ${C.frame};
`;

const RailButton = styled.button<{ $on?: boolean; $first?: boolean }>`
  display: flex;
  align-items: center;
  justify-content: center;
  width: ${(p) => (p.$on ? 34 : p.$first ? 30 : 33)}px;
  height: ${(p) => (p.$first ? 30 : 44)}px;
  margin-left: 3px;
  margin-bottom: ${(p) => (p.$first ? 3 : 0)}px;
  border: 1px solid ${(p) => (p.$on ? C.frame : "transparent")};
  border-right: 0;
  background: ${(p) => (p.$on ? "#fff" : "none")};
`;

const Navigator = styled.aside`
  display: flex;
  flex-direction: column;
  width: 323px;
  padding: 0 9px 6px 8px;
  border-right: 1px solid ${C.frame};
`;

const NavTitle = styled.div`
  display: flex;
  align-items: center;
  gap: 4px;
  height: 27px;
  padding-right: 2px;
  margin-left: -2px;
  button { margin-left: auto; }
`;

const TreeFrame = styled.div`
  display: flex;
  flex-direction: column;
  flex: 1;
  min-height: 0;
  border: 1px solid #d4d4d4;
`;

const TreeScroll = styled.div`
  flex: 1;
  min-height: 0;
  overflow: hidden;
`;

const Tree = styled.table`
  width: 100%;
  table-layout: fixed;
  border-collapse: separate;
  border-spacing: 0;
  th, td {
    height: 20px;
    padding: 0;
    border-bottom: 1px solid #e6e6e6;
    border-right: 1px solid #e6e6e6;
    text-align: left;
    font-weight: 400;
    overflow: hidden;
    white-space: nowrap;
  }
  th { height: 21px; padding-left: 6px; background: #efefef; border-color: #d0d0d0; }
  th:last-child, td:last-child { border-right: 0; }
  tbody tr:nth-child(even) { background: #f9f9f9; }
`;

const NameHead = styled.span`
  display: flex;
  align-items: center;
  gap: 18px;
`;

const NameCell = styled.span<{ $bold?: boolean }>`
  display: flex;
  align-items: center;
  height: 19px;
  font-weight: ${(p) => (p.$bold ? 700 : 400)};
  svg + span { margin-left: 3px; }
`;

const FlagCell = styled.span`
  display: flex;
  padding-left: 5px;
`;

const ScrollBar = styled.div`
  height: 16px;
  padding: 7px 0 0 17px;
  background: #efefef;
  &::after {
    content: "";
    display: block;
    width: 226px;
    height: 2px;
    background: #868686;
  }
`;

const Splitter = styled.div`
  height: 6px;
  margin: 2px 0;
  border: 1px solid ${C.frame};
  background: #dcdcdc;
`;

const Fold = styled.button`
  display: flex;
  align-items: center;
  gap: 9px;
  height: 24px;
  padding-left: 9px;
  padding-top: 1px;
  border-bottom: 2px solid #d0d0d0;
  font-size: 14px;
  color: #00668c;
`;

const treeLine = { fill: "none", stroke: "#999", strokeDasharray: "1 1" };

const Gutter = ({ kind }: { kind: "leaf" | "plus" | "minus" | "child" }) =>
  kind === "child" ? (
    <svg width="38" height="19" viewBox="0 0 38 19"><path d="M28.500 0v9.500H38" {...treeLine} /></svg>
  ) : (
    <svg width="19" height="19" viewBox="0 0 19 19">
      <path d={kind === "leaf" ? "M9.500 19V9.500H19" : kind === "plus" ? "M9.500 0v19M9.500 9.500H19" : "M9.500 0v9.500H19"} {...treeLine} />
      {kind !== "leaf" && (
        <g>
          <path d="M5.500 5.500h8v8h-8z" fill="#fff" stroke="#ccc" />
          <path d={kind === "plus" ? "M7 9.500h5M9.500 7v5" : "M7 9.500h5"} stroke="#111" />
        </g>
      )}
    </svg>
  );

type Row = { kind: "leaf" | "plus" | "minus" | "child"; icons: string[]; text: string; bold?: boolean; struct?: boolean; latest?: boolean };

const rows: Row[] = [
  { kind: "leaf", icons: ["clock"], text: "历史记录建模模式" },
  { kind: "plus", icons: ["views"], text: "模型视图" },
  { kind: "plus", icons: ["check", "camera"], text: "摄像机" },
  { kind: "minus", icons: ["ball", "history"], text: "模型历史记录", latest: true },
  { kind: "child", icons: ["eye", "bodyIcon"], text: "体 (1)", bold: true, struct: true, latest: true },
];

/* --------------------------------------------------------------- viewport */

const Work = styled.div`
  display: flex;
  flex-direction: column;
  flex: 1;
  min-width: 0;
`;

const PartTabs = styled.div`
  display: flex;
  height: 27px;
  border-bottom: 2px solid ${C.teal};
`;

const PartTab = styled.button`
  display: flex;
  align-items: center;
  gap: 6px;
  height: 25px;
  padding: 0 6px;
  background: ${C.teal};
  color: #fff;
`;

const Viewport = styled.div`
  position: relative;
  flex: 1;
  min-height: 0;
  overflow: hidden;
`;

const Scene = styled.svg`
  position: absolute;
  top: 0;
  left: 0;
`;

const Dialog = styled.section`
  position: absolute;
  top: 0;
  left: 0;
  width: 322px;
  background: #f0f0f0;
  border-right: 1px solid #d8d8d8;
  border-bottom: 1px solid #d0d0d0;
`;

const DialogTitle = styled.div`
  display: flex;
  align-items: center;
  gap: 9px;
  height: 24px;
  margin-right: -1px;
  padding: 0 9px 0 7px;
  background: ${C.teal};
  color: #fff;
  span { flex: 1; }
`;

const DialogBody = styled.div`
  display: flex;
  flex-direction: column;
  gap: 2px;
  padding: 6px 5px 0 6px;
`;

const Box = styled.div`
  padding: 0 8px 8px;
  border: 1px solid #d2d2d2;
  background: #fff;
`;

const TopBox = styled(Box)`
  padding: 7px 8px 8px;
`;

const ClosedBox = styled(Box)`
  padding: 0 8px;
`;

const BoxHead = styled.button<{ $closed?: boolean }>`
  display: flex;
  align-items: center;
  gap: ${(p) => (p.$closed ? 9 : 7)}px;
  width: 100%;
  height: ${(p) => (p.$closed ? 23 : 24)}px;
  padding-bottom: 2px;
  font-size: 13px;
  font-weight: 700;
  color: #00668c;
`;

const Fields = styled.div`
  display: flex;
  flex-direction: column;
  gap: 2px;
  padding-top: 6px;
`;

const Field = styled.div`
  display: grid;
  grid-template-columns: 1fr 138px;
  align-items: center;
`;

const Picker = styled.div`
  display: flex;
  gap: 2px;
`;

const PickState = styled.div`
  display: flex;
  align-items: center;
  gap: 4px;
  flex: 1;
  height: 32px;
  background: #ffdf75;
`;

const PickButton = styled.button`
  display: flex;
  align-items: center;
  justify-content: center;
  width: 32px;
  height: 32px;
  border: 1px solid #fbbf26;
  background: #ffdf75;
`;

const ReverseRow = styled.div`
  display: flex;
  align-items: center;
  justify-content: space-between;
  height: 24px;
`;

const SquareButton = styled.button`
  display: flex;
  align-items: center;
  justify-content: center;
  width: 24px;
  height: 24px;
  border: 1px solid #6e6e6e;
  background: #fff;
`;

const ValueBox = styled.div`
  display: flex;
  align-items: center;
  height: 25px;
  padding-right: 5px;
  border: 1px solid #6e6e6e;
  background: #fff;
  input {
    width: 78px;
    padding: 0 0 0 4px;
    border: 0;
    outline: 0;
    background: none;
  }
  button { margin-left: auto; }
  span { margin-left: 5px; }
`;

const Popup = styled.ul`
  position: absolute;
  z-index: 3;
  top: 25px;
  left: 0;
  width: 100%;
  margin: 0;
  padding: 0;
  border: 1px solid #6e6e6e;
  border-top-width: 2px;
  background: #fff;
  list-style: none;
`;

const Choice = styled.li<{ $on?: boolean }>`
  display: flex;
  align-items: center;
  gap: 4px;
  height: 20px;
  padding-left: 2px;
  background: ${(p) => (p.$on ? "#d9ebef" : "#fff")};
`;

const FoldUp = styled.button`
  display: flex;
  align-items: center;
  justify-content: center;
  width: 100%;
  height: 12px;
`;

const Actions = styled.div`
  display: flex;
  justify-content: flex-end;
  gap: 5px;
  margin: -2px 0 9px;
  padding: 8px 10px 0 0;
  border-top: 1px solid #d2d2d2;
`;

const Action = styled.button<{ $main?: boolean }>`
  width: 54px;
  height: 25px;
  border: 1px solid ${C.teal};
  background: ${(p) => (p.$main ? C.teal : "#f3f3f3")};
  color: ${(p) => (p.$main ? "#fff" : C.teal)};
`;

const Tooltip = styled.div`
  position: absolute;
  z-index: 4;
  top: 234px;
  left: 307px;
  display: flex;
  align-items: center;
  gap: 6px;
  height: 64px;
  padding: 0 7px 0 6px;
  border: 1px solid #a5a5a5;
  background: #fff;
  white-space: nowrap;
`;

const CurveBar = styled.div`
  position: absolute;
  top: 0;
  left: 616px;
  display: flex;
  align-items: center;
  gap: 9px;
  height: 39px;
  padding: 6px 0 0 13px;
  border-bottom: 1px solid #d6d6d6;
  background: #fff;
`;

const CurveBarEnd = styled.div`
  display: flex;
  align-items: flex-end;
  height: 26px;
  margin-left: 6px;
  padding: 0 6px 5px 4px;
  border-left: 1px solid #d6d6d6;
`;

const MiniBar = styled.div`
  position: absolute;
  top: 45px;
  left: 911px;
  display: flex;
  align-items: center;
  height: 34px;
  padding: 0 3px 0 2px;
  border: 1px solid ${C.frame};
  background: #f0f0f0;
  label { padding: 0 2px 0 1px; }
`;

const Grip = styled.span`
  width: 7px;
  height: 26px;
  margin-right: 8px;
  background: radial-gradient(circle, #b5b5b5 1px, transparent 2px) 0 0 / 4px 4px;
`;

const MiniPick = styled.button`
  display: flex;
  align-items: center;
  justify-content: space-between;
  width: 44px;
  height: 26px;
  margin-right: 3px;
  padding: 0 5px 0 4px;
  border: 1px solid #6e6e6e;
  background: #fff;
`;

const MiniField = styled.div`
  display: flex;
  align-items: center;
  width: 62px;
  height: 24px;
  padding-right: 4px;
  border: 1px solid #6e6e6e;
  background: #fff;
  input {
    flex: 1;
    min-width: 0;
    padding: 0 0 0 4px;
    border: 0;
    outline: 0;
  }
`;

/* ----------------------------------------------------------------- status */

const Status = styled.footer`
  display: grid;
  grid-template-columns: 48.6% 1fr;
  align-items: center;
  height: 24px;
  padding: 0 0 3px 3px;
  border-top: 1px solid ${C.frame};
  border-bottom: 1px solid #a3c4c4;
  font-size: 11px;
  font-weight: 500;
`;

const Ime = styled.div`
  position: fixed;
  right: 539px;
  bottom: 3px;
  display: flex;
  align-items: center;
  gap: 8px;
  height: 26px;
  padding: 0 4px 0 34px;
  border: 1px solid #a9c8e6;
  background: #fff;
`;

const ImeLogo = styled.span`
  position: absolute;
  left: -4px;
  bottom: -2px;
`;

const Watermark = styled.div`
  position: fixed;
  right: 7px;
  bottom: 10px;
  font-family: "Liberation Sans", "Noto Sans CJK SC", sans-serif;
  font-size: 34px;
  font-weight: 300;
  line-height: 46px;
  color: rgba(222, 222, 222, 0.9);
  text-shadow: 1px 1px 1px rgba(110, 110, 110, 0.75);
  pointer-events: none;
  span { font-size: 37px; }
`;

/* ------------------------------------------------------------------ model */

const holes = [[995, 589], [918, 637], [840, 685], [789, 771], [883, 768], [960, 720], [1037, 672], [1089, 586]];

const Model = () => (
  <Scene width="1560" height="805" viewBox="360 205 1560 805" role="img" aria-label="bracket">
    <defs>
      <linearGradient id="cap" gradientUnits="userSpaceOnUse" x1="1150" y1="0" x2="1340" y2="0">
        <stop offset="0" stopColor="#656565" /><stop offset=".3" stopColor="#8c8c8c" /><stop offset=".65" stopColor="#a8a8a8" /><stop offset="1" stopColor="#8d8d8d" />
      </linearGradient>
      <linearGradient id="nose" gradientUnits="userSpaceOnUse" x1="755" y1="800" x2="915" y2="850">
        <stop offset="0" stopColor="#6a6a6a" /><stop offset=".45" stopColor="#5f5f5f" /><stop offset=".7" stopColor="#707070" /><stop offset="1" stopColor="#8c8c8c" />
      </linearGradient>
      <linearGradient id="bore" gradientUnits="userSpaceOnUse" x1="1208" y1="390" x2="1302" y2="400">
        <stop offset="0" stopColor="#8a8a8a" /><stop offset=".45" stopColor="#a8a8a8" /><stop offset=".8" stopColor="#808080" /><stop offset="1" stopColor="#5e5e5e" />
      </linearGradient>
      <linearGradient id="drill" x1="0" y1="0" x2="1" y2=".3">
        <stop offset="0" stopColor="#7a7a7a" /><stop offset=".4" stopColor="#a0a0a0" /><stop offset=".6" stopColor="#6a6a6a" /><stop offset="1" stopColor="#7c7c7c" />
      </linearGradient>
      <linearGradient id="wide" x1="0" y1="0" x2="1" y2="0">
        <stop offset="0" stopColor="#6a6a6a" /><stop offset=".25" stopColor="#787878" /><stop offset=".5" stopColor="#9c9c9c" /><stop offset=".65" stopColor="#858585" /><stop offset=".8" stopColor="#999" /><stop offset="1" stopColor="#8a8a8a" />
      </linearGradient>
      <linearGradient id="slotEnd" gradientUnits="userSpaceOnUse" x1="1018" y1="630" x2="1048" y2="618">
        <stop offset="0" stopColor="#8c8c8c" /><stop offset=".6" stopColor="#666" /><stop offset="1" stopColor="#707070" />
      </linearGradient>
      <radialGradient id="knob" cx=".4" cy=".35"><stop offset="0" stopColor="#ffb04d" /><stop offset="1" stopColor="#d96900" /></radialGradient>
      <clipPath id="boreClip"><ellipse cx="1255" cy="386" rx="49" ry="41" transform="rotate(-25 1255 386)" /></clipPath>
      <clipPath id="drillClip"><ellipse cx="0" cy="0" rx="17.600" ry="11.300" transform="rotate(-32)" /></clipPath>
    </defs>
    <g stroke="#2b2b2b" strokeWidth=".9" strokeLinejoin="round">
      <path d="M752 807L783 857Q790 869 813 873.500 833 877 856 873 890 864 929 844L896 793z" fill="url(#nose)" />
      <path d="M896 793L1172 622l339 45-19 63-312-41L929 844z" fill="#8c8c8c" />
      <path d="M1104 489L826 660Q790 683 765 717 740 752 741 780 743 805 763 817 777 824 799 824 845 822 896 793L1172 622 1121 519z" fill="#959595" />
      <path d="M1121 519l336 44 54 104-339-45z" fill="#a5a5a5" />
      <path d="M1149 344l15 29-43 146-17-30z" fill="#6e6e6e" />
      <path d="M1164 373L1121 519l336 44-116-222Q1322 306 1281 301.500 1236 297 1197 327 1176 345 1164 373z" fill="#8c8c8c" />
      <path d="M1149 344Q1160 307 1196 288 1226 270 1262 271 1298 275 1318 301 1328 316 1341 341 1322 306 1281 301.500 1236 297 1197 327 1176 345 1164 373z" fill="url(#cap)" />
    </g>
    <g clipPath="url(#boreClip)">
      <rect x="1200" y="335" width="110" height="100" fill="url(#bore)" />
      <ellipse cx="1240" cy="357" rx="49" ry="41" transform="rotate(-25 1240 357)" fill="#fff" stroke="#2b2b2b" />
      <path d="M1285 362l15 29" stroke="#2b2b2b" />
    </g>
    <ellipse cx="1255" cy="386" rx="49" ry="41" transform="rotate(-25 1255 386)" fill="none" stroke="#2b2b2b" strokeWidth=".9" />
    <g fill="url(#wide)" stroke="#2b2b2b" strokeWidth=".9">
      <ellipse cx="1236" cy="582" rx="37" ry="14.500" transform="rotate(20 1236 582)" />
      <ellipse cx="1394" cy="603" rx="37" ry="14.500" transform="rotate(20 1394 603)" />
      <path d="M1227 565l-8 26M1385 586l-8 26" />
    </g>
    {holes.map(([x, y]) => (
      <g key={`${x}-${y}`} transform={`translate(${x} ${y})`} stroke="#2b2b2b" strokeWidth=".9">
        <g clipPath="url(#drillClip)">
          <rect x="-18" y="-15" width="36" height="30" fill="url(#drill)" stroke="none" />
          <ellipse cx="16" cy="18" rx="17.600" ry="11.300" transform="rotate(-32 16 18)" fill="#959595" />
        </g>
        <ellipse rx="17.600" ry="11.300" transform="rotate(-32)" fill="none" />
      </g>
    ))}
    <g stroke="#2b2b2b" strokeWidth=".9">
      <path d="M853 709L1009 613l20 33L874 742z" fill="#8a8a8a" />
      <path d="M853 709Q828 726 830 742 834 754 849 752.500 861 750 874 742z" fill="#979797" />
      <path d="M1009 613Q1029 602 1039 605 1050 610 1048 622 1045 636 1029 646z" fill="url(#slotEnd)" />
    </g>
    <path d="M1164 373Q1176 345 1197 327 1236 297 1281 301.500 1322 306 1341 341" fill="none" stroke="#f99b45" strokeWidth="3" />
    <path d="M1164 374l15-57 8 2-5-2 5-17-8 15 6 3-5 4z" fill="#8d7a35" />
    <path d="M1179 315l8-15v17q-4 2-8-2z" fill="#9a8540" />
    <path d="M1197 327l74-52" stroke="#b09a5e" strokeWidth="1.300" />
    <circle cx="1197" cy="327" r="6.500" fill="url(#knob)" />
    <path d="M1113 552l10-40 4-5-1 18z" fill="#6f9a6f" />
    <path d="M1117 556l32 2 17 5-18 1z" fill="#e89a9a" stroke="#c77" strokeWidth=".5" />
    <path d="M1113 557l10 14 2 11-7-8z" fill="#7c9cf5" />
    <g fontFamily="Liberation Sans, sans-serif" fontSize="13">
      <text x="1107" y="504" fill="#3a9a3a">YC</text>
      <text x="1147" y="576" fill="#d22c2c">XC</text>
      <text x="1107" y="594" fill="#1740f0">ZC</text>
      <text x="485" y="833" fill="#2c7a2c">Y</text>
      <text x="540" y="915" fill="#c03030">X</text>
      <text x="484" y="946" fill="#4a5cf0">Z</text>
    </g>
    <path d="M448 870l39 5 11 21-39-5zM448 870l-12 37 11 20 12-36M447 927l40 5 11-36" fill="none" stroke="#9a9a9a" />
    <path d="M471 882l6-27-1-2 11-15v19l-5 1-6 26z" fill="#247326" />
    <path d="M496 903l23 3v-3l17 7-17 3-2-2-21-3z" fill="#d23434" />
    <path d="M470 912l4-2 7 14 4-2v14l-10-7 2-3z" fill="#0c47f5" />
  </Scene>
);

/* -------------------------------------------------------------------- app */

const tabs = ["主页", "曲线", "曲面", "装配", "分析", "视图", "显示", "选择", "工具", "PMI", "应用模块", "梅雷常用", "梅雷模具", "梅雷制图", "LXH编程2.9_CAM", "LXH编程2.9_电极", "LXH编程2.9_建模", "能新 V20.02", "星空 V8.0", "模圣设计", "模圣软件", "GC工具箱"];

const tabRoom = (t: string) => (t.startsWith("LXH") ? 13 : t.includes(" V") || t === "曲线" ? 12 : 11);

const pickIcons = ["cubesDim", "linkDim", "forbid", "cubeOrange", "faceOrange", "cubeTop", "cubeEdge", "curveS", "points", "pickFilter", "pickReset", "pickBody", "pickRect"];

const rail = ["assembly", "constraint", "bracket", "books", "bracketDims", "measure", "info", "browser", "clock", "tools", "wand", "template"];

const coords = [["X", "-1.945972660"], ["Y", "48.90713321"], ["Z", "10.00000000"]];

const Head = ({ text }: { text: string }) => (
  <BoxHead><Icon name="triDown" w={7} h={6} />{text}</BoxHead>
);

export default function App() {
  return (
    <Shell>
      <Global />
      <Header>
        <TitleRow>
          <Quick>
            <Brand>NX</Brand>
            <QuickRule />
            <QuickButton aria-label="保存" $w={22}><Icon name="save" w={18} /></QuickButton>
            <QuickRule />
            <QuickButton aria-label="撤消"><Icon name="undo" w={18} /></QuickButton>
            <QuickButton aria-label="撤消列表" $w={12}><Caret color="#fff" w={6} /></QuickButton>
            <QuickButton aria-label="重做"><Icon name="redo" w={17} /></QuickButton>
            <QuickRule />
            <QuickButton aria-label="剪切" $w={20}><Icon name="cut" w={17} /></QuickButton>
            <QuickButton aria-label="复制"><Icon name="copy" w={17} /></QuickButton>
            <QuickButton aria-label="粘贴" $w={22}><Icon name="paste" w={17} /></QuickButton>
            <QuickButton aria-label="移动" $w={22}><Icon name="target" w={17} /></QuickButton>
            <QuickRule />
            <QuickButton aria-label="添加" $w={18}><Icon name="plusCyan" w={16} /></QuickButton>
            <QuickButton aria-label="添加列表" $w={18}><Caret color="#fff" w={6} /></QuickButton>
            <QuickRule />
            <QuickButton aria-label="语音" $w={18}><Icon name="mic" w={17} /></QuickButton>
            <QuickRule />
            <QuickButton aria-label="触控" $w={22}><Icon name="hand" w={18} /></QuickButton>
            <QuickRule />
            <QuickButton aria-label="切换窗口" $w={20}><Icon name="windows" w={18} /></QuickButton>
            <QuickButton $w={60}><Icon name="window" w={18} />窗口<Caret color="#fff" w={6} /></QuickButton>
            <QuickButton aria-label="更多" $w={12}><Icon name="overflow" w={8} /></QuickButton>
          </Quick>
          <Title>NX 2406 山涧果子 - 建模</Title>
          <WindowButtons>
            <Maker>SIEMENS</Maker>
            <button aria-label="最小化"><Icon name="minimize" w={12} /></button>
            <button aria-label="还原"><Icon name="restore" w={12} /></button>
            <button aria-label="关闭"><Icon name="close" w={12} /></button>
          </WindowButtons>
        </TitleRow>
        <TabRow>
          <FileTab>文件(F)</FileTab>
          <Tabs>
            {tabs.map((t) => <Tab key={t} $on={t === "曲线"} $room={tabRoom(t)}>{t}</Tab>)}
          </Tabs>
          <SearchBox>
            <input type="text" aria-label="搜索" placeholder="搜索 (Ctrl+Space)" />
            <Icon name="search" w={18} />
          </SearchBox>
          <TabTools>
            <button aria-label="全屏"><Icon name="fullscreen" w={18} /></button>
            <button aria-label="折叠功能区"><Icon name="chevronUp" w={18} /></button>
            <button aria-label="帮助"><Icon name="help" w={18} /></button>
            <button aria-label="提醒"><Icon name="alert" w={16} h={18} /></button>
          </TabTools>
        </TabRow>
      </Header>

      <Ribbon>
        <RibbonGroup label="构造" end={4}>
          <BigButton icon="plane" text="基准平面" more />
          <BigButton icon="sketch" text="草图" />
        </RibbonGroup>
        <RibbonGroup label="基本" end={3}>
          <SmallStack h={23} size={16} after={3} items={[{ icon: "point", text: "点", more: true }, { icon: "lineSeg", text: "直线" }, { icon: "arc", text: "圆弧/圆" }]} />
          <BigButton icon="spline" text="艺术样条" />
          <BigButton icon="letter" text="文本" />
        </RibbonGroup>
        <RibbonGroup label="高级">
          <BigButton icon="surfCurve" text="曲面上的曲线" />
          <BigButton icon="drawShape" text="绘制形状" />
          <BigButton icon="helix" text="螺旋" />
          <BigButton icon="parabola" text="更多" more apart />
        </RibbonGroup>
        <RibbonGroup label="派生">
          <BigButton icon="project" text="投影曲线" />
          <BigButton icon="intersect" text="相交曲线" />
          <BigButton icon="shadow" text="阴影曲线" />
          <SmallStack h={36} size={24} before={3} after={1} items={[{ icon: "offset", text: "偏置曲线" }, { icon: "offsetFace", text: "在面上偏置" }]} />
          <SmallStack h={36} size={24} items={[{ icon: "bridge", text: "桥接" }, { icon: "composite", text: "复合" }]} />
          <BigButton icon="moreDerive" text="更多" more apart />
        </RibbonGroup>
        <RibbonGroup label="编辑">
          <BigButton icon="trim" text="修剪曲线" />
          <BigButton icon="length" text="曲线长度" />
          <BigButton icon="xform" text="X 型" />
          <BigButton icon="moreEdit" text="更多" more apart />
        </RibbonGroup>
        <RibbonEnd><button aria-label="功能区选项"><Caret w={6} /></button></RibbonEnd>
      </Ribbon>

      <SelectionBar>
        <MenuButton><Icon name="burger" w={11} /><span>菜单(<u>M</u>)</span><Caret w={6} /></MenuButton>
        <BarRule />
        <ComboBox id="filter" label="选择过滤器" value="无选择过滤器" w={149} h={22} font={11} />
        <BarIcon aria-label="重置过滤器" $w={34}><Icon name="filterReset" w={19} /></BarIcon>
        <ComboBox id="scope" label="选择范围" value="整个装配" w={156} h={22} font={11} />
        <BarIcons>
          {pickIcons.map((n) => <BarIcon key={n} aria-label={n}><Icon name={n} w={18} /></BarIcon>)}
          <BarIcon aria-label="选择列表" $w={16}><Caret w={6} /></BarIcon>
          <BarIcon aria-label="着色"><Icon name="cubeMid" w={18} /></BarIcon>
          <BarIcon aria-label="剖切"><Icon name="cubeSplit" w={18} /></BarIcon>
          <BarIcon as="span" $w={8} />
          <BarRule />
        </BarIcons>
        <BarEnd><button aria-label="选择条选项"><Caret w={6} /></button></BarEnd>
      </SelectionBar>

      <Main>
        <Rail>
          <RailButton aria-label="设置" $first><Icon name="gear" w={16} /></RailButton>
          {rail.map((n) => <RailButton key={n} aria-label={n} $on={n === "bracket"}><Icon name={n} w={24} /></RailButton>)}
        </Rail>

        <Navigator>
          <NavTitle>
            <Icon name="bracket" w={16} />
            部件导航器
            <button aria-label="最大化"><Icon name="maximize" w={12} /></button>
          </NavTitle>
          <TreeFrame>
            <TreeScroll>
              <Tree>
                <colgroup><col width="196" /><col width="39" /><col width="24" /><col /></colgroup>
                <thead>
                  <tr>
                    <th><NameHead>名称<Icon name="sortUp" w={9} h={5} /></NameHead></th>
                    <th>当...</th>
                    <th>最</th>
                    <th>附注</th>
                  </tr>
                </thead>
                <tbody>
                  {rows.map((r) => (
                    <tr key={r.text}>
                      <td>
                        <NameCell $bold={r.bold}>
                          <Gutter kind={r.kind} />
                          {r.icons.map((i) => <Icon key={i} name={i} w={16} />)}
                          <span>{r.text}</span>
                        </NameCell>
                      </td>
                      <td>{r.struct && <FlagCell><Icon name="struct" w={14} h={15} /></FlagCell>}</td>
                      <td>{r.latest && <FlagCell><Icon name="check" w={14} /></FlagCell>}</td>
                      <td />
                    </tr>
                  ))}
                  {Array.from({ length: 28 }, (_, i) => <tr key={i}><td /><td /><td /><td /></tr>)}
                </tbody>
              </Tree>
            </TreeScroll>
            <ScrollBar />
          </TreeFrame>
          <Splitter />
          {["搜索", "相关性", "细节", "预览"].map((t) => <Fold key={t}><Icon name="tri" w={6} h={10} />{t}</Fold>)}
        </Navigator>

        <Work>
          <PartTabs>
            <PartTab><Icon name="bracket" w={15} />bracket.prt<Icon name="edit" w={11} /><Icon name="closeDim" w={10} /></PartTab>
          </PartTabs>
          <Viewport>
            <Model />

            <Dialog>
              <DialogTitle>
                <Icon name="gearWhite" w={14} />
                <span>点</span>
                <button aria-label="重置"><Icon name="reset" w={12} /></button>
                <button aria-label="帮助"><Icon name="question" w={12} /></button>
                <button aria-label="关闭"><Icon name="close" w={13} /></button>
              </DialogTitle>
              <DialogBody>
                <TopBox>
                  <ComboBox id="method" label="点类型" value="曲线/边上的点" h={26} pad={24} icon="pointOnCurve" />
                </TopBox>

                <Box>
                  <Head text="曲线" />
                  <Fields>
                    <Picker>
                      <PickState><Icon name="check" w={16} />选择曲线 (1)</PickState>
                      <PickButton aria-label="选择曲线"><Icon name="curvesPick" w={24} /></PickButton>
                    </Picker>
                    <ReverseRow>
                      反向
                      <SquareButton aria-label="反向"><Icon name="reverse" w={20} /></SquareButton>
                    </ReverseRow>
                  </Fields>
                </Box>

                <Box>
                  <Head text="曲线上的位置" />
                  <Fields>
                    <Field>
                      <label htmlFor="ref">位置引用</label>
                      <ComboBox id="ref" value="曲线起点" h={26} pad={24} icon="curveStart" />
                    </Field>
                    <Field>
                      <label htmlFor="pos">位置</label>
                      <ComboBox id="pos" value="弧长" h={26} pad={24} icon="arcLen">
                        <Popup>
                          <Choice $on><Icon name="arcLen" w={16} />弧长</Choice>
                          <Choice><Icon name="arcPercent" w={16} />弧长百分比</Choice>
                          <Choice><Icon name="arcParam" w={16} />参数百分比</Choice>
                          <Choice><Icon name="eye" w={16} />显示快捷方式</Choice>
                        </Popup>
                      </ComboBox>
                    </Field>
                    <Field>
                      <label htmlFor="len">曲线长度</label>
                      <ValueBox><input id="len" type="text" /></ValueBox>
                    </Field>
                  </Fields>
                </Box>

                <Box>
                  <Head text="输出坐标" />
                  <Fields>
                    <Field>
                      <label htmlFor="csys">参考</label>
                      <ComboBox id="csys" value="绝对坐标系 - 工作部件" h={25} pad={4} />
                    </Field>
                    {coords.map(([axis, value]) => (
                      <Field key={axis}>
                        <label htmlFor={`c${axis}`}>{axis}</label>
                        <ValueBox>
                          <input id={`c${axis}`} type="text" defaultValue={value} />
                          <span>mm</span>
                          <button aria-label={`${axis} 选项`}><Caret /></button>
                        </ValueBox>
                      </Field>
                    ))}
                  </Fields>
                </Box>

                <Box>
                  <Head text="偏置" />
                  <Fields>
                    <Field>
                      <label htmlFor="off">偏置选项</label>
                      <ComboBox id="off" value="无" h={25} pad={4} />
                    </Field>
                  </Fields>
                </Box>

                <ClosedBox>
                  <BoxHead $closed><Icon name="tri" w={5} h={8} />设置</BoxHead>
                </ClosedBox>

                <FoldUp aria-label="折叠"><Icon name="sortUp" w={9} h={5} /></FoldUp>
                <Actions>
                  <Action>&lt; 确定 &gt;</Action>
                  <Action $main>应用</Action>
                  <Action>取消</Action>
                </Actions>
              </DialogBody>
            </Dialog>

            <CurveBar>
              <ComboBox id="rule" label="曲线规则" value="相连曲线" w={156} h={22} font={11} />
              <button aria-label="在相交处停止"><Icon name="stopAt" w={24} /></button>
              <button aria-label="跟随圆角"><Icon name="follow" w={24} /></button>
              <button aria-label="链接"><Icon name="chain" w={24} /></button>
              <button aria-label="更多"><Icon name="dots" w={19} h={6} /></button>
              <CurveBarEnd><button aria-label="工具条选项"><Caret w={6} /></button></CurveBarEnd>
            </CurveBar>

            <MiniBar>
              <Grip />
              <MiniPick aria-label="位置引用"><Icon name="curveStart" w={16} /><Caret /></MiniPick>
              <MiniPick aria-label="位置"><Icon name="arcLen" w={16} /><Caret /></MiniPick>
              <label htmlFor="mini">曲线长度</label>
              <MiniField><input id="mini" type="text" defaultValue="10" /><Caret /></MiniField>
            </MiniBar>

            <Tooltip role="tooltip">
              <svg width="48" height="52" viewBox="0 0 48 52" aria-hidden="true">
                <path d="M1 50Q2 4 48 2" fill="none" stroke={C.cyan} strokeWidth="1.300" />
                <path d="M15 50q0-20 15-28M23 23l9-2-2 9" fill="none" stroke="#444" strokeWidth="1.300" />
                <circle cx="24" cy="10" r="4.500" fill={C.orange} />
              </svg>
              按沿曲线的距离定义位置。
            </Tooltip>
          </Viewport>
        </Work>
      </Main>

      <Status>
        <span>指定曲线参数百分比</span>
        <span>指定了曲线上的关联点</span>
      </Status>

      <Ime>
        <ImeLogo><Icon name="sogou" w={32} /></ImeLogo>
        {["imeA", "imePunct", "imeMic", "imeKeys", "imeShirt", "imeGame", "imeGrid", "imeGear"].map((n) => (
          <button key={n} aria-label={n}><Icon name={n} w={16} /></button>
        ))}
      </Ime>
      <Watermark>CSDN @<span>山涧果子</span></Watermark>
    </Shell>
  );
}
